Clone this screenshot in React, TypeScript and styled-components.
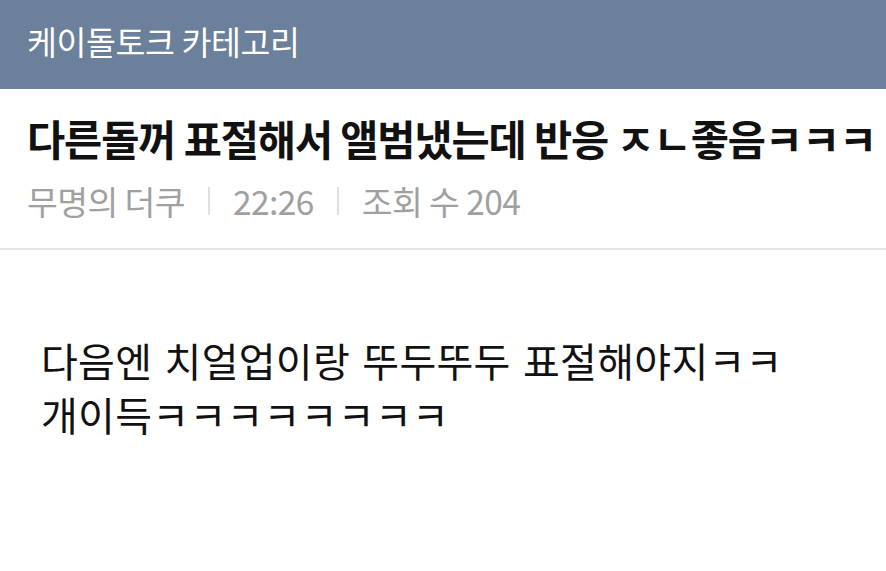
import React from "react";
import styled, { createGlobalStyle } from "styled-components";

const Global = createGlobalStyle`
  html, body { margin: 0; padding: 0; background: #ffffff; }
  body { font-family: "Noto Sans CJK KR", "Noto Sans", sans-serif; }
  * { box-sizing: border-box; }
`;

const Page = styled.div`
  width: 886px;
  height: 571px;
  background: #ffffff;
  display: flex;
  flex-direction: column;
  overflow: hidden;
`;

const TopBar = styled.header`
  height: 89px;
  background: #6b809a;
  display: flex;
  align-items: center;
  padding: 0 0 8px 27px;
`;

const TopTitle = styled.h1`
  margin: 0;
  color: #ffffff;
  font-size: 32.5px;
  font-weight: 400;
  line-height: 1.2;
  letter-spacing: -0.4px;
`;

const PostHead = styled.section`
  padding: 28px 0 28px 27px;
  border-bottom: 2px solid #e3e3e3;
  display: flex;
  flex-direction: column;
  gap: 21px;
`;

const PostTitle = styled.h2`
  margin: 0;
  color: #111111;
  font-size: 41.5px;
  font-weight: 700;
  line-height: 46px;
  letter-spacing: -1.1px;
  white-space: nowrap;
  transform: translateY(-2px);
`;

const Meta = styled.div`
  display: flex;
  align-items: center;
  color: #a0a0a0;
  font-size: 33.5px;
  line-height: 36px;
  letter-spacing: -0.6px;
  transform: translateY(-1px);
`;

const MetaItem = styled.span``;

const Divider = styled.span`
  width: 2px;
  height: 28px;
  background: #e0e0e0;
  margin: 0 23px;
`;

const Body = styled.article`
  padding: 83px 0 0 41px;
  color: #111111;
  font-size: 40px;
  line-height: 54px;
  letter-spacing: 0.3px;
  word-spacing: 3px;
`;

const Line = styled.p`
  margin: 0;
  white-space: nowrap;
`;

export default function App() {
  return (
    <>
      <Global />
      <Page>
        <TopBar>
          <TopTitle>케이돌토크 카테고리</TopTitle>
        </TopBar>
        <PostHead>
          <PostTitle>다른돌꺼 표절해서 앨범냈는데 반응 ㅈㄴ좋음ㅋㅋㅋ</PostTitle>
          <Meta>
            <MetaItem>무명의 더쿠</MetaItem>
            <Divider />
            <MetaItem>22:26</MetaItem>
            <Divider />
            <MetaItem>조회 수 204</MetaItem>
          </Meta>
        </PostHead>
        <Body>
          <Line>다음엔 치얼업이랑 뚜두뚜두 표절해야지ㅋㅋ</Line>
          <Line>개이득ㅋㅋㅋㅋㅋㅋㅋㅋ</Line>
        </Body>
      </Page>
    </>
  );
}
